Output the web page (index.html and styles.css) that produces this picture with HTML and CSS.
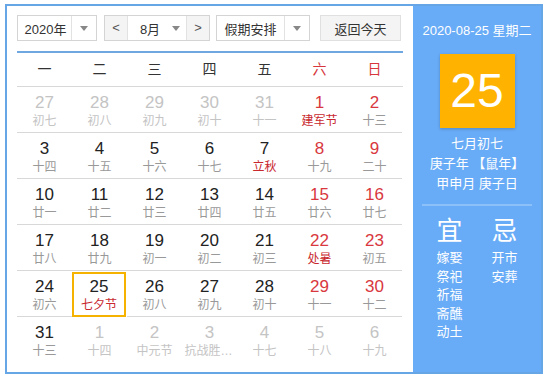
FILE: index.html
```html
<!DOCTYPE html>
<html lang="zh-CN">
  <head>
    <meta charset="UTF-8" />
    <meta name="viewport" content="width=device-width, initial-scale=1.0" />
    <title>万年历</title>
    <link rel="stylesheet" href="styles.css">
  </head>
  <body>
    <div class="calendar">
      <div class="main">
        <div class="toolbar">
          <div class="select year">
            <span class="select-text">2020年</span>
            <span class="select-arrow"></span>
          </div>
          <div class="select month">
            <span class="nav-btn">&lt;</span>
            <span class="select-text">8月</span>
            <span class="select-arrow"></span>
            <span class="nav-btn">&gt;</span>
          </div>
          <div class="select holiday">
            <span class="select-text">假期安排</span>
            <span class="select-arrow"></span>
          </div>
          <button class="today-btn">返回今天</button>
        </div>

        <div class="week">
          <span>一</span><span>二</span><span>三</span><span>四</span><span>五</span>
          <span class="weekend">六</span><span class="weekend">日</span>
        </div>

        <div class="days">
          <div class="day other"><b>27</b><i>初七</i></div>
          <div class="day other"><b>28</b><i>初八</i></div>
          <div class="day other"><b>29</b><i>初九</i></div>
          <div class="day other"><b>30</b><i>初十</i></div>
          <div class="day other"><b>31</b><i>十一</i></div>
          <div class="day weekend"><b>1</b><i class="fest">建军节</i></div>
          <div class="day weekend"><b>2</b><i>十三</i></div>

          <div class="day"><b>3</b><i>十四</i></div>
          <div class="day"><b>4</b><i>十五</i></div>
          <div class="day"><b>5</b><i>十六</i></div>
          <div class="day"><b>6</b><i>十七</i></div>
          <div class="day"><b>7</b><i class="fest">立秋</i></div>
          <div class="day weekend"><b>8</b><i>十九</i></div>
          <div class="day weekend"><b>9</b><i>二十</i></div>

          <div class="day"><b>10</b><i>廿一</i></div>
          <div class="day"><b>11</b><i>廿二</i></div>
          <div class="day"><b>12</b><i>廿三</i></div>
          <div class="day"><b>13</b><i>廿四</i></div>
          <div class="day"><b>14</b><i>廿五</i></div>
          <div class="day weekend"><b>15</b><i>廿六</i></div>
          <div class="day weekend"><b>16</b><i>廿七</i></div>

          <div class="day"><b>17</b><i>廿八</i></div>
          <div class="day"><b>18</b><i>廿九</i></div>
          <div class="day"><b>19</b><i>初一</i></div>
          <div class="day"><b>20</b><i>初二</i></div>
          <div class="day"><b>21</b><i>初三</i></div>
          <div class="day weekend"><b>22</b><i class="fest">处暑</i></div>
          <div class="day weekend"><b>23</b><i>初五</i></div>

          <div class="day"><b>24</b><i>初六</i></div>
          <div class="day today"><b>25</b><i class="fest">七夕节</i></div>
          <div class="day"><b>26</b><i>初八</i></div>
          <div class="day"><b>27</b><i>初九</i></div>
          <div class="day"><b>28</b><i>初十</i></div>
          <div class="day weekend"><b>29</b><i>十一</i></div>
          <div class="day weekend"><b>30</b><i>十二</i></div>

          <div class="day last"><b>31</b><i>十三</i></div>
          <div class="day last other"><b>1</b><i>十四</i></div>
          <div class="day last other"><b>2</b><i>中元节</i></div>
          <div class="day last other"><b>3</b><i class="long">抗战胜利纪念日</i></div>
          <div class="day last other"><b>4</b><i>十七</i></div>
          <div class="day last other"><b>5</b><i>十八</i></div>
          <div class="day last other"><b>6</b><i>十九</i></div>
        </div>
      </div>

      <div class="side">
        <div class="side-date">2020-08-25 星期二</div>
        <div class="side-day">25</div>
        <div class="side-lunar">
          <div>七月初七</div>
          <div>庚子年 【鼠年】</div>
          <div>甲申月 庚子日</div>
        </div>
        <div class="side-line"></div>
        <div class="almanac">
          <div class="almanac-col">
            <div class="almanac-title">宜</div>
            <div>嫁娶</div>
            <div>祭祀</div>
            <div>祈福</div>
            <div>斋醮</div>
            <div>动土</div>
          </div>
          <div class="almanac-col">
            <div class="almanac-title">忌</div>
            <div>开市</div>
            <div>安葬</div>
          </div>
        </div>
      </div>
    </div>
  </body>
</html>
```

FILE: styles.css
```css
body {
  margin: 0;
  font-family: "Liberation Sans", "Noto Sans CJK SC", sans-serif;
  background: #fff;
  color: #333;
}
.calendar {
  display: flex;
  width: 534px;
  height: 366px;
  margin: 4px 0 0 5px;
  border: 2px solid #66a6e6;
}
.main {
  width: 386px;
  padding: 9px 10px 0 10px;
}
.toolbar {
  display: flex;
  height: 26px;
  font-size: 13px;
}
.select {
  display: flex;
  align-items: center;
  box-sizing: border-box;
  height: 26px;
  border: 1px solid #d4d4d4;
  background: #fff;
}
.select-text {
  flex: 1;
  text-align: center;
  color: #333;
}
.select-arrow {
  position: relative;
  width: 24px;
  height: 100%;
  border-left: 1px solid #e2e2e2;
}
.select-arrow::after {
  content: "";
  position: absolute;
  left: 8px;
  top: 10px;
  border-left: 4px solid transparent;
  border-right: 4px solid transparent;
  border-top: 5px solid #888;
}
.year {
  width: 80px;
}
.year .select-text {
  padding-left: 2px;
}
.month {
  width: 106px;
  margin-left: 7px;
}
.month .select-arrow {
  border-left: none;
  width: 22px;
}
.nav-btn {
  width: 22px;
  height: 100%;
  line-height: 24px;
  text-align: center;
  color: #555;
  background: #f4f4f4;
  border-right: 1px solid #e2e2e2;
}
.nav-btn:last-child {
  border-right: none;
  border-left: 1px solid #e2e2e2;
}
.month .select-text {
  padding-left: 8px;
}
.holiday {
  width: 94px;
  margin-left: 6px;
}
.today-btn {
  width: 81px;
  height: 26px;
  margin-left: 10px;
  border: 1px solid #e0e0e0;
  background: #f4f4f4;
  font-family: inherit;
  font-size: 13px;
  color: #333;
  padding: 0;
}
.week {
  display: grid;
  grid-template-columns: repeat(7, 55px);
  height: 33px;
  margin-top: 10px;
  border-top: 2px solid #6fa8e0;
  border-bottom: 1px solid #d8d8d8;
  font-size: 14px;
  line-height: 33px;
  text-align: center;
  color: #333;
}
.week .weekend {
  color: #d6363c;
}
.days {
  display: grid;
  grid-template-columns: repeat(7, 55px);
}
.day {
  display: flex;
  flex-direction: column;
  align-items: center;
  box-sizing: border-box;
  height: 46px;
  padding-top: 6px;
  border-bottom: 1px solid #d8d8d8;
  overflow: hidden;
}
.day.last {
  border-bottom: none;
}
.day b {
  font-weight: normal;
  font-size: 17px;
  line-height: 20px;
  color: #222;
}
.day i {
  font-style: normal;
  font-size: 12px;
  line-height: 16px;
  color: #999;
  white-space: nowrap;
}
.day i.long {
  width: 50px;
  overflow: hidden;
  text-overflow: ellipsis;
}
.day.weekend b {
  color: #d8383e;
}
.day i.fest {
  color: #c8282e;
}
.day.other b,
.day.other i {
  color: #c4c4c4;
}
.day.today {
  box-shadow: inset 0 0 0 2px #f5b300;
  margin: 1px 1px 0 0;
  height: 45px;
  padding-top: 5px;
  border-bottom: none;
}
.side {
  width: 128px;
  background: #68abf6;
  color: #fff;
  display: flex;
  flex-direction: column;
  align-items: center;
}
.side-date {
  margin-top: 16px;
  font-size: 13px;
  line-height: 18px;
}
.side-day {
  width: 75px;
  height: 74px;
  margin-top: 14px;
  background: #ffb300;
  box-shadow: 0 1px 3px rgba(0, 0, 0, 0.2);
  font-size: 48px;
  line-height: 74px;
  text-align: center;
}
.side-lunar {
  margin-top: 6px;
  font-size: 13px;
  line-height: 20px;
  text-align: center;
}
.side-line {
  width: 110px;
  height: 2px;
  margin-top: 10px;
  background: #8cc0f8;
}
.almanac {
  display: flex;
  margin-top: 10px;
}
.almanac-col {
  width: 55px;
  text-align: center;
  font-size: 13px;
  line-height: 18.5px;
}
.almanac-title {
  font-size: 26px;
  line-height: 30px;
  margin-bottom: 3px;
}
```
